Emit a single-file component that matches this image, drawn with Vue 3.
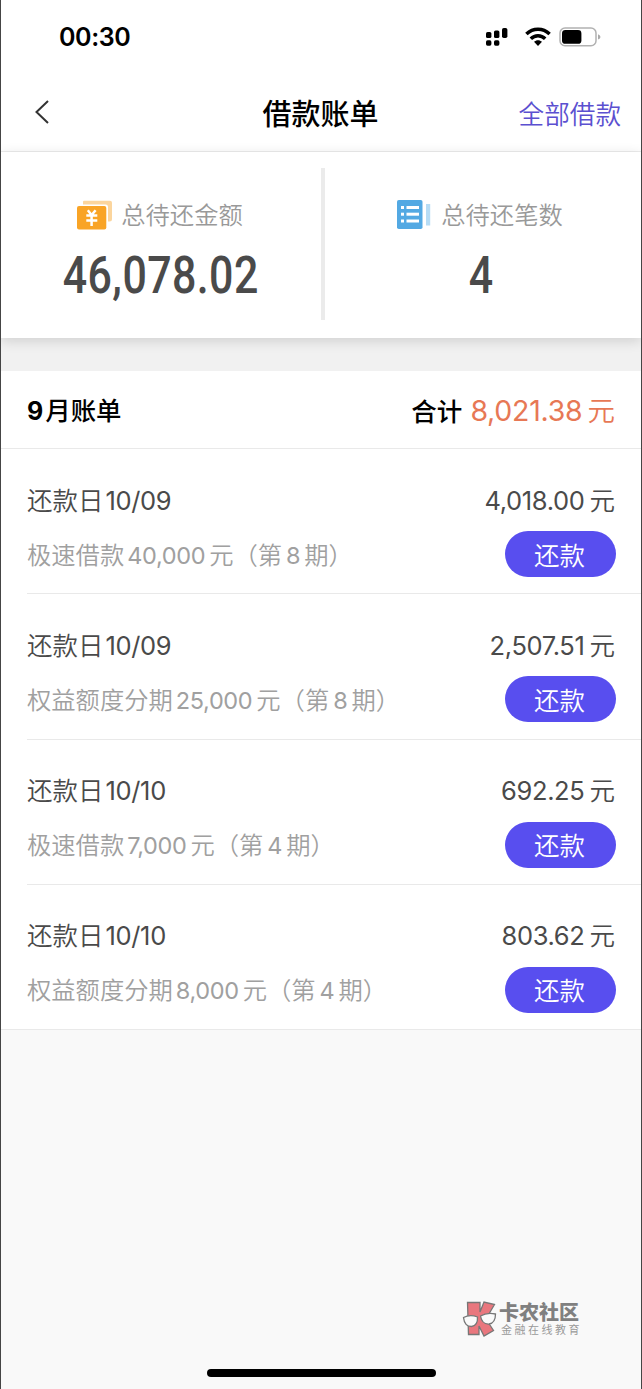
<script setup>
const bills = [
  { date: '10/09', amount: '4,018.00', name: '极速借款', total: '40,000', term: '8' },
  { date: '10/09', amount: '2,507.51', name: '权益额度分期', total: '25,000', term: '8' },
  { date: '10/10', amount: '692.25', name: '极速借款', total: '7,000', term: '4' },
  { date: '10/10', amount: '803.62', name: '权益额度分期', total: '8,000', term: '4' },
]
</script>

<template>
  <div class="screen">
    <header class="status">
      <span class="clock">00:30</span>
      <div class="indicators">
        <svg class="signal" width="23" height="20" viewBox="0 0 23 20">
          <rect x="0" y="5" width="5.4" height="6" rx="1.6" />
          <rect x="8" y="3.5" width="5.4" height="7.5" rx="1.6" />
          <rect x="16" y="1" width="5.4" height="10" rx="1.8" />
          <rect x="0" y="13.3" width="5.4" height="5.4" rx="1.6" />
          <rect x="8" y="13.3" width="5.4" height="5.4" rx="1.6" />
        </svg>
        <svg class="wifi" width="26" height="20" viewBox="0 0 26 20">
          <g fill="none" stroke="#000" stroke-width="3.5">
            <path d="M1.4 7 C8 .5 18 .5 24.6 7" />
            <path d="M5.8 11.8 C9.9 7.8 16.1 7.8 20.2 11.8" />
          </g>
          <path d="M9 14.8 C11.3 12.7 14.7 12.7 17 14.8 L13 19 Z" />
        </svg>
        <svg class="battery" width="42" height="20" viewBox="0 0 42 20">
          <rect x="1" y="1" width="36" height="17.8" rx="5" fill="#fff" stroke="#b1b1b1" stroke-width="1.5" />
          <rect x="3" y="3" width="19.4" height="13.8" rx="3.4" />
          <path d="M39 7.3 Q41.5 8.2 41.5 10 Q41.5 11.8 39 12.5 Z" fill="#aaa" />
        </svg>
      </div>
    </header>

    <nav class="nav">
      <svg class="back" width="16" height="26" viewBox="0 0 16 26">
        <path d="M14 2 L2.5 13 L14 24" fill="none" stroke="#333" stroke-width="2" />
      </svg>
      <h1>借款账单</h1>
      <a class="all">全部借款</a>
    </nav>

    <section class="summary">
      <div class="cell">
        <div class="label">
          <svg width="36" height="30" viewBox="0 0 36 30">
            <path d="M7 .7 H33 Q35 .7 35 2.7 V19 Q35 21.5 32.5 21.5 H31 V7 Q31 4.5 28.5 4.5 H6 V2 Q6 .7 7 .7Z" fill="#fbd59d" />
            <rect x="0" y="6" width="29.3" height="23.5" rx="2" fill="#f9a426" />
            <path d="M10.8 10.2 L14.6 15 L18.6 10.2 M14.6 14.5 V26 M9.3 15.6 H20.3 M9.3 20.4 H20.3" fill="none" stroke="#fff" stroke-width="2.5" />
          </svg>
          <span>总待还金额</span>
        </div>
        <div class="figure"><span>46,078.02</span></div>
      </div>
      <i class="divider"></i>
      <div class="cell">
        <div class="label">
          <svg width="36" height="30" viewBox="0 0 36 30">
            <rect x="0" y="0" width="25.5" height="29" rx="1.8" fill="#53a9e3" />
            <rect x="29" y="4" width="4.2" height="21.5" fill="#b6dcf5" />
            <g fill="#fff">
              <rect x="4" y="6" width="3" height="3" /><rect x="9.5" y="6" width="12.5" height="3" />
              <rect x="4" y="12.7" width="3" height="3" /><rect x="9.5" y="12.7" width="12.5" height="3" />
              <rect x="4" y="19.5" width="3" height="3" /><rect x="9.5" y="19.5" width="12.5" height="3" />
            </g>
          </svg>
          <span>总待还笔数</span>
        </div>
        <div class="figure"><span>4</span></div>
      </div>
    </section>

    <main class="month">
      <div class="month-head">
        <h2><b>9</b>月账单</h2>
        <div class="sum"><strong>合计</strong><span class="sum-num">8,021.38</span><span class="sum-unit">元</span></div>
      </div>
      <ul>
        <li v-for="(b, i) in bills" :key="i">
          <div class="line">
            <span>还款日<span class="num date">{{ b.date }}</span></span>
            <span class="amount"><span class="num">{{ b.amount }}</span><span class="unit">元</span></span>
          </div>
          <div class="line">
            <span class="desc">{{ b.name }}<span class="num total">{{ b.total }}</span>元（第<span class="num term">{{ b.term }}</span>期）</span>
            <button>还款</button>
          </div>
        </li>
      </ul>
    </main>

    <div class="watermark">
      <svg width="35" height="36" viewBox="0 0 35 36">
        <path d="M5.5 1.5 H18 V11 L22 1 L32.5 3.5 L24 18 L31.5 29.5 L22 35 L17 25 V33.5 H6.5 Z" fill="#e9777e" stroke="#777" stroke-width="1.3" />
        <path d="M1.5 16.5 Q8 13 15.5 16 Q16 24.5 9.5 25.5 Q2.5 25.5 1.5 16.5Z M18.5 15 Q25 11 33.5 13 Q33.5 22 27 23 Q20 23.500 18.5 15Z" fill="#fafafa" stroke="#777" stroke-width="1.3" />
      </svg>
      <div class="brand">
        <strong>卡农社区</strong>
        <span>金融在线教育</span>
      </div>
    </div>
    <i class="home"></i>
  </div>
</template>

<style>
body { background: #f9f9f9; }
</style>

<style scoped>
.screen {
  position: relative;
  box-sizing: border-box;
  width: 642px;
  height: 1389px;
  overflow: hidden;
  border: solid #454545;
  border-width: 0 1px;
  background: #f9f9f9;
  color: #4a4a4a;
  font-family: "Noto Sans CJK SC", sans-serif;
  font-weight: 350;
}
h1, h2, ul { margin: 0; padding: 0; list-style: none; }
.num, .sum-num, .clock, b { font-family: Inter, "Noto Sans CJK SC", sans-serif; }
.status {
  display: flex;
  justify-content: space-between;
  align-items: center;
  height: 74px;
  padding: 0 40px 0 58px;
  background: #fff;
}
.clock { font-size: 25px; font-weight: 600; color: #000; letter-spacing: -.4px; }
.indicators { display: flex; align-items: center; }
.wifi { margin-left: 16px; }
.battery { margin-left: 8px; }
.nav {
  display: grid;
  grid-template-columns: 1fr auto 1fr;
  align-items: center;
  height: 77px;
  padding: 0 20px 0 33px;
  background: #fff;
  border-bottom: 1px solid #ededed;
}
.back { margin-top: -1px; }
.nav h1 { font-size: 29px; font-weight: 500; color: #000; line-height: 40px; margin: -2px 0 0 -14px; }
.all { justify-self: end; margin-top: -1px; font-size: 25.6px; color: #5b50d0; white-space: nowrap; }
.summary {
  position: relative;
  z-index: 1;
  display: flex;
  height: 186px;
  background: #fff;
  box-shadow: 0 3px 12px rgba(0, 0, 0, .14);
}
.month-head, .line { display: flex; justify-content: space-between; align-items: center; }
.cell { flex: 0 0 320px; padding-top: 45px; }
.divider { flex: none; width: 4px; height: 152px; margin: 16px -4px 0 0; background: #ebebeb; }
.label { display: flex; justify-content: center; align-items: center; height: 36px; gap: 8px; padding-right: 2px; color: #999; font-size: 24.3px; }
.label span { line-height: 36px; margin-top: -2px; }
.figure { margin-top: 15px; height: 56px; text-align: center; font: 500 52px/56px Roboto, sans-serif; color: #4a4a4a; }
.figure span { display: inline-block; letter-spacing: .5px; transform: scaleX(.825); }
.month { margin-top: 33px; background: #fff; box-shadow: 0 -33px 0 #f1f1f1; }
.month-head { height: 77px; padding: 0 26px; border-bottom: 1px solid #e9e9e9; color: #000; }
h2 { font-size: 25.4px; font-weight: 500; margin-top: -2px; }
h2 b { font-size: 25px; font-weight: 700; margin-right: 2px; }
.sum { display: flex; align-items: center; font-size: 25.5px; }
.sum strong { font-weight: 500; margin-right: 8px; }
.sum-num { font-size: 28.5px; font-weight: 400; letter-spacing: -.25px; color: #e77855; margin-top: 1px; }
.sum-unit { font-size: 27.5px; color: #e77855; margin: -1px 0 0 5px; }
li { box-sizing: border-box; height: 145.3px; margin-left: 26px; padding: 28px 25px 0 0; border-bottom: 1px solid #e9e9e9; font-size: 25.5px; }
li:last-child { margin-left: 0; padding-left: 26px; }
.line { height: 46px; }
.line > span { position: relative; top: -2px; }
.line + .line { margin-top: 8px; }
.num { font-weight: 400; letter-spacing: -.35px; }
.date { margin-left: 2px; }
.amount { margin-right: 1px; }
.unit { margin-left: 5px; }
.line .desc { top: -1px; font-size: 24.3px; color: #a0a0a0; white-space: nowrap; }
.desc .num { font-size: 23.5px; }
.total { margin: 0 4px 0 3px; }
.term { margin: 0 4px; }
button { width: 111px; height: 46px; padding: 0 2px 1px 0; border: 0; border-radius: 23px; background: #584eef; color: #fff; font: 350 25.5px/44px "Noto Sans CJK SC", sans-serif; }
.watermark { position: absolute; left: 461px; top: 1301px; display: flex; gap: 2px; }
.brand { display: flex; flex-direction: column; white-space: nowrap; color: #808080; }
.brand strong { font-size: 20px; font-weight: 900; line-height: 22px; }
.brand span { font-size: 11px; line-height: 13px; letter-spacing: 2.5px; margin-left: 2px; color: #999; font-weight: 400; }
.home { position: absolute; left: 206px; top: 1369px; width: 229px; height: 8px; border-radius: 4px; background: #000; }
</style>
